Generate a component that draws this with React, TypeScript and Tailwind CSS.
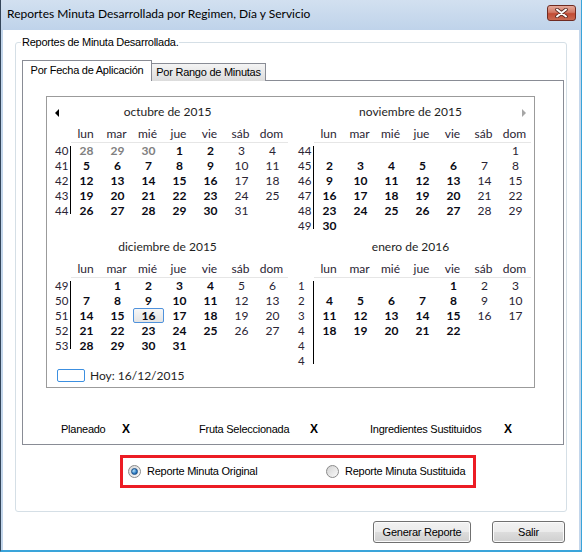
import React from 'react';

type Cell = { d: number; trail?: boolean } | null;

interface MonthProps {
  title: string;
  weeks: (number | null)[];
  rows: Cell[][];
  today?: number;
  arrow?: 'left' | 'right';
}

const heads = ['lun', 'mar', 'mié', 'jue', 'vie', 'sáb', 'dom'];

const makeRows = (firstCol: number, last: number, trail: number[] = []): Cell[][] => {
  const cells: Cell[] = [];
  for (let i = 0; i < firstCol; i++) cells.push(trail[i] ? { d: trail[i], trail: true } : null);
  for (let d = 1; d <= last; d++) cells.push({ d });
  while (cells.length < 42) cells.push(null);
  const rows: Cell[][] = [];
  for (let r = 0; r < 6; r++) rows.push(cells.slice(r * 7, r * 7 + 7));
  return rows;
};

const Month: React.FC<MonthProps> = ({ title, weeks, rows, today, arrow }) => {
  const count = weeks.filter(w => w !== null).length;

  return (
    <div className="relative w-[241px]">
      <div className="h-[20px] flex items-center justify-center text-[#1e1e1e]">{title}</div>
      {arrow === 'left' && (
        <svg className="absolute left-[8px] top-[7px]" width="5" height="8" viewBox="0 0 5 8">
          <path d="M4 0 L0 4 L4 8 Z" fill="#000" />
        </svg>
      )}
      {arrow === 'right' && (
        <svg className="absolute right-[5px] top-[7px]" width="5" height="8" viewBox="0 0 5 8">
          <path d="M1 0 L5 4 L1 8 Z" fill="#a6a6a6" />
        </svg>
      )}

      <div className="mt-[3px] flex h-[18px]">
        <div className="w-[24px]" />
        <div className="flex w-[217px] border-b border-[#e6e6e6]">
          {heads.map(h => (
            <div key={h} className="w-[31px] text-center leading-[17px] pr-[2px] text-[#2a2433]">
              {h}
            </div>
          ))}
        </div>
      </div>

      <div className="flex">
        <div className="w-[23px] flex flex-col">
          {weeks.map((w, i) => (
            <div key={i} className="h-[15px] leading-[15px] pl-[8px] text-[11.5px] text-[#2a2433]">
              {w}
            </div>
          ))}
        </div>
        <div className="w-[1px]">
          <div className={`mt-[3px] bg-black ${count === 5 ? 'h-[68px]' : 'h-[83px]'}`} />
        </div>
        <div className="w-[217px] flex flex-col">
          {rows.map((r, i) => (
            <div key={i} className="flex h-[15px]">
              {r.map((c, j) => {
                if (!c) return <div key={j} className="w-[31px]" />;
                const isToday = today === c.d && !c.trail;
                let cls = 'font-bold text-[#0a0a14]';
                if (c.trail) cls = 'font-bold text-[#808080]';
                else if (j >= 5) cls = 'text-[#2a2433]';
                return (
                  <div
                    key={j}
                    className={`w-[31px] text-center leading-[13px] ${
                      isToday
                        ? 'border border-[#4f92dc] rounded-[2px] bg-[linear-gradient(#f7f7f7,#e4e4e4)]'
                        : 'py-[1px]'
                    } ${cls}`}
                  >
                    {c.d}
                  </div>
                );
              })}
            </div>
          ))}
        </div>
      </div>
    </div>
  );
};

const App: React.FC = () => {
  const ui = "font-['Liberation_Sans',Arial,sans-serif] text-[11px] tracking-[-0.25px] text-black";

  return (
    <div className="w-[582px] h-[552px] flex flex-col bg-[#c3d6eb] border-l border-l-[#34465a] border-r border-r-[#3aa4da] border-b-2 border-b-[#3aa4da]">
      {/* title bar */}
      <div className="h-[30px] flex items-start justify-between pl-[6px] pr-[5px] bg-[linear-gradient(#d2e0f0,#bfd3ea)]">
        <div className="pt-[5px] font-[Lato,sans-serif] text-[12px] text-black">
          Reportes Minuta Desarrollada por Regimen, Día y Servicio
        </div>
        <div className="mt-[5px] w-[29px] h-[16px] rounded-[3px] border border-[#6f2b22] bg-[linear-gradient(#e5aa9c_0%,#d27965_45%,#c24b34_55%,#c96a52_100%)] flex items-center justify-center">
          <svg width="13" height="10" viewBox="0 0 13 10">
            <path d="M2 1.5 L11 8.5 M11 1.5 L2 8.5" stroke="#5a2a22" strokeWidth="3.6" strokeLinecap="round" />
            <path d="M2 1.5 L11 8.5 M11 1.5 L2 8.5" stroke="#ffffff" strokeWidth="2" strokeLinecap="round" />
          </svg>
        </div>
      </div>

      {/* client area */}
      <div className={`flex-1 mx-[2px] bg-white pt-[6px] px-[12px] flex flex-col ${ui}`}>
        <fieldset className="w-[552px] border border-[#d5dfe6] rounded-[3px] pb-[23px]">
          <legend className="ml-[5px] px-[1px] leading-[13px]">Reportes de Minuta Desarrollada.</legend>

          <div className="mt-[11px] ml-[6px] flex items-end h-[21px]">
            <div className="relative z-10 w-[130px] h-[21px] border border-b-0 border-[#898c95] bg-white flex items-center justify-center pb-[1px]">
              Por Fecha de Aplicación
            </div>
            <div className="w-[114px] h-[18px] border border-l-0 border-b-0 border-[#898c95] bg-[linear-gradient(#f4f4f4,#dcdcdc)] flex items-center justify-center">
              Por Rango de Minutas
            </div>
          </div>

          <div className="ml-[6px] -mt-[1px] w-[542px] border border-[#898c95] bg-white pt-[15px] pb-[8px]">
            {/* month calendar */}
            <div className="ml-[23px] w-[489px] border border-[#9b9b9b] pb-[4px] pr-[3px] font-[Lato,sans-serif] text-[12px] tracking-normal">
              <div className="flex gap-[2px] pt-[5px]">
                <Month
                  title="octubre de 2015"
                  weeks={[40, 41, 42, 43, 44, null]}
                  rows={makeRows(3, 31, [28, 29, 30])}
                  arrow="left"
                />
                <Month
                  title="noviembre de 2015"
                  weeks={[44, 45, 46, 47, 48, 49]}
                  rows={makeRows(6, 30)}
                  arrow="right"
                />
              </div>
              <div className="flex gap-[2px] pt-[4px]">
                <Month
                  title="diciembre de 2015"
                  weeks={[49, 50, 51, 52, 53, null]}
                  rows={makeRows(1, 31)}
                  today={16}
                />
                <Month title="enero de 2016" weeks={[1, 2, 3, 4, 4, 4]} rows={makeRows(4, 22)} />
              </div>
              <div className="h-[15px] flex items-center pl-[10px]">
                <div className="w-[28px] h-[13px] border border-[#3c8fe0] rounded-[2px]" />
                <span className="ml-[5px] text-[#1e1e1e]">Hoy: 16/12/2015</span>
              </div>
            </div>

            <div className="mt-[35px] pl-[38px] flex h-[13px] leading-[13px]">
              <span className="w-[61px]">Planeado</span>
              <span className="w-[77px] font-bold text-[12px]">X</span>
              <span className="w-[111px]">Fruta Seleccionada</span>
              <span className="w-[60px] font-bold text-[12px]">X</span>
              <span className="w-[134px]">Ingredientes Sustituidos</span>
              <span className="font-bold text-[12px]">X</span>
            </div>
          </div>

          <div className="mt-[10px] ml-[104px] w-[356px] h-[33px] border-[3px] border-[#ec1c24] flex items-center pl-[5px]">
            <label className="w-[198px] flex items-center">
              <span className="w-[13px] h-[13px] rounded-full border border-[#8a8a8a] bg-[linear-gradient(135deg,#d6d6d6,#fbfbfb)] flex items-center justify-center">
                <span className="w-[7px] h-[7px] rounded-full border border-[#1b4f86] bg-[radial-gradient(circle_at_35%_35%,#b9e3fa,#2a7bc4_60%,#16508f)]" />
              </span>
              <span className="ml-[6px]">Reporte Minuta Original</span>
            </label>
            <label className="flex items-center">
              <span className="w-[13px] h-[13px] rounded-full border border-[#8a8a8a] bg-[linear-gradient(135deg,#d2d2d2,#fafafa)]" />
              <span className="ml-[6px]">Reporte Minuta Sustituida</span>
            </label>
          </div>
        </fieldset>

        <div className="mt-[9px] flex justify-end gap-[21px] pr-[2px]">
          <button className="w-[98px] h-[22px] rounded-[3px] border border-[#707070] bg-[linear-gradient(#f2f2f2_0%,#ebebeb_50%,#dddddd_50%,#cfcfcf_100%)] shadow-[inset_0_0_0_1px_#fbfbfb]">
            Generar Reporte
          </button>
          <button className="w-[73px] h-[22px] rounded-[3px] border border-[#707070] bg-[linear-gradient(#f2f2f2_0%,#ebebeb_50%,#dddddd_50%,#cfcfcf_100%)] shadow-[inset_0_0_0_1px_#fbfbfb]">
            Salir
          </button>
        </div>
      </div>
    </div>
  );
};

export default App;
